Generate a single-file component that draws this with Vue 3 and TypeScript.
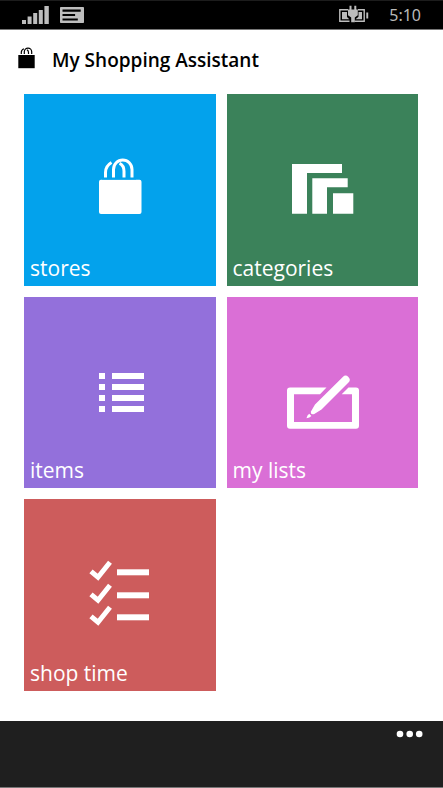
<script setup lang="ts">
type TileId = 'stores' | 'categories' | 'items' | 'lists' | 'shop'

interface Tile {
  id: TileId
  label: string
}

const tiles: Tile[] = [
  { id: 'stores', label: 'stores' },
  { id: 'categories', label: 'categories' },
  { id: 'items', label: 'items' },
  { id: 'lists', label: 'my lists' },
  { id: 'shop', label: 'shop time' },
]

const itemRows: number[] = [29, 40, 51, 62]
const checkRows: number[] = [0, 23, 45]
</script>

<template>
  <div class="phone">
    <div class="status">
      <svg class="signal" width="28" height="20" viewBox="0 0 28 20" aria-hidden="true">
        <path d="M0 15h4v4H0zM5.6 11.5h4V19h-4zM11.2 8h4v11h-4zM16.8 5h4v14h-4zM22.4 1h4.4v18h-4.4z" />
      </svg>
      <svg width="24" height="16" viewBox="0 0 24 16" aria-hidden="true">
        <rect width="24" height="16" rx="0.8" />
        <path class="ink" d="M2.5 2.6h18.2v2.2H2.5zM2.5 7h12.6v2H2.5zM2.5 11.4h15.3v2H2.5z" />
      </svg>
      <svg class="battery" width="30" height="20" viewBox="0 0 30 20" aria-hidden="true">
        <path class="outline" d="M9 4.800H.8v11.400h9.700M19 4.800h6.200v11.400H15.500" />
        <path d="M3 7h5v5l2.300 2.300H3zM19.500 7H23v7.300h-6.500l3-2.500zM27.300 7.500h1.900v6h-1.900z" />
        <path d="M10.500.8h2V4.500h2.800V.8h2v3.700h1.500v5.700l-3 2.400v4.600h-3.600v-4.600L9 10.200V4.500h1.500z" />
      </svg>
      <time class="clock">5:10</time>
    </div>

    <header class="header">
      <svg width="18" height="22" viewBox="0 0 18 22" aria-hidden="true">
        <path d="M.3 8h16.400v13.200H.3z" />
        <path class="handle" d="M6.300 7V4.800a3.700 3.700 0 0 1 7.400 0V7M3.300 7V5.300q0-2.500 2.600-3.600M9 2.800q1.500.8 1.500 2.800V7" />
      </svg>
      <h1 class="title">My Shopping Assistant</h1>
    </header>

    <main class="tiles">
      <button v-for="tile in tiles" :key="tile.id" type="button" class="tile" :class="tile.id">
        <svg class="icon" width="96" height="96" viewBox="0 0 96 96" aria-hidden="true">
          <template v-if="tile.id === 'stores'">
            <rect x="27" y="37.700" width="42.500" height="34.300" rx="2" />
            <path class="line" d="M41.500 37V27.500a9.250 9.500 0 0 1 18.500 0V37M33.500 37v-6.500q0-6.500 6-10M47.500 21.300q4.500 2 4.500 8V37" />
            <path class="gap" d="M30 36.600h34" />
          </template>
          <template v-else-if="tile.id === 'categories'">
            <path d="M18 22h50v9H33v40.700H18zM38.300 36.300h35.400v9H53v26.400H38.300zM59 51.300h20.300v20.400H59z" />
          </template>
          <template v-else-if="tile.id === 'items'">
            <template v-for="y in itemRows" :key="y">
              <rect x="27" :y="y" width="6" height="6" />
              <rect x="40" :y="y" width="32" height="6" />
            </template>
          </template>
          <template v-else-if="tile.id === 'lists'">
            <path d="M52.500 43.500H16q-3 0-3 3v35.200q0 3 3 3h66q3 0 3-3V46.500q0-3-3-3h-7.500l-6.800 6.800H78V78H20V50.300h26z" />
            <path d="M68.800 33a3.900 3.900 0 0 1 5.700 5.500L47.500 65.500l-7.200 4.500q-3.800 1.200-3.500-2.300l4.200-7.200z" />
            <path d="M35.200 69.800l2.200 2.100-2 1.500-2.900.800 1-2.800z" />
          </template>
          <template v-else>
            <g v-for="dy in checkRows" :key="dy" :transform="`translate(0 ${dy})`">
              <path class="check" d="M19 24.300l7 5.900L38 15.300" />
              <rect x="45" y="22.300" width="32" height="6" />
            </g>
          </template>
        </svg>
        <span class="label">{{ tile.label }}</span>
      </button>
    </main>

    <footer class="appbar">
      <button type="button" class="more" aria-label="More">
        <svg width="28" height="8" viewBox="0 0 28 8" aria-hidden="true">
          <circle cx="4" cy="4" r="3.300" />
          <circle cx="13.700" cy="4" r="3.300" />
          <circle cx="23.200" cy="4" r="3.300" />
        </svg>
      </button>
    </footer>
  </div>
</template>

<style>
body {
  background: #fff;
}
</style>

<style scoped>
.phone {
  display: flex;
  flex-direction: column;
  min-height: 100vh;
  font-family: "Open Sans", "Noto Sans", sans-serif;
}

.status {
  display: flex;
  align-items: center;
  box-sizing: border-box;
  height: 30px;
  padding: 0 22px;
  border-top: 1px solid #1c1c1c;
  border-bottom: 1px solid #777;
  background: #000;
  color: #b9b9b9;
}

.status svg {
  fill: #bdbdbd;
}

.status .ink {
  fill: #000;
}

.signal {
  margin-right: 10px;
}

.battery {
  margin-left: auto;
}

.battery .outline {
  fill: none;
  stroke: #bdbdbd;
  stroke-width: 1.4;
}

.clock {
  margin-left: 20px;
  font-family: "Noto Sans", sans-serif;
  font-size: 16px;
  line-height: 28px;
}

.header {
  display: flex;
  align-items: center;
  gap: 16px;
  height: 64px;
  padding: 0 18px;
}

.header svg {
  margin-bottom: 8px;
}

.header .handle {
  fill: none;
  stroke: #000;
  stroke-width: 1.2;
}

.title {
  margin: 0 0 4px;
  font-size: 19px;
  font-weight: 600;
  line-height: 28px;
  color: #000;
}

.tiles {
  display: grid;
  grid-template-columns: 1fr 1fr;
  gap: 11px;
  padding: 0 25px 30px 24px;
}

.tile {
  display: grid;
  place-items: center;
  aspect-ratio: 1;
  margin: 0;
  padding: 0;
  border: 0;
  color: #fff;
  font: inherit;
  text-align: left;
}

.icon,
.label {
  grid-area: 1 / 1;
}

.icon {
  fill: #fff;
}

.icon .line,
.icon .check,
.icon .gap {
  fill: none;
  stroke: #fff;
  stroke-width: 3;
}

.icon .check {
  stroke-width: 5;
}

.icon .gap {
  stroke: #03a2ec;
  stroke-width: 2;
}

.label {
  place-self: end start;
  padding: 0 6px;
  font-size: 21px;
  line-height: 36px;
}

.stores {
  background: #03a2ec;
}

.categories {
  background: #3b825a;
}

.items {
  background: #9370db;
}

.lists {
  background: #da6fd6;
}

.shop {
  background: #cd5c5c;
}

.appbar {
  display: flex;
  justify-content: flex-end;
  align-items: flex-start;
  box-sizing: border-box;
  height: 67px;
  margin-top: auto;
  padding: 9px 19px 0;
  border-bottom: 1px solid #777;
  background: #1f1f1f;
}

.more {
  display: flex;
  margin: 0;
  padding: 0;
  border: 0;
  background: none;
}

.more svg {
  fill: #fff;
}
</style>
